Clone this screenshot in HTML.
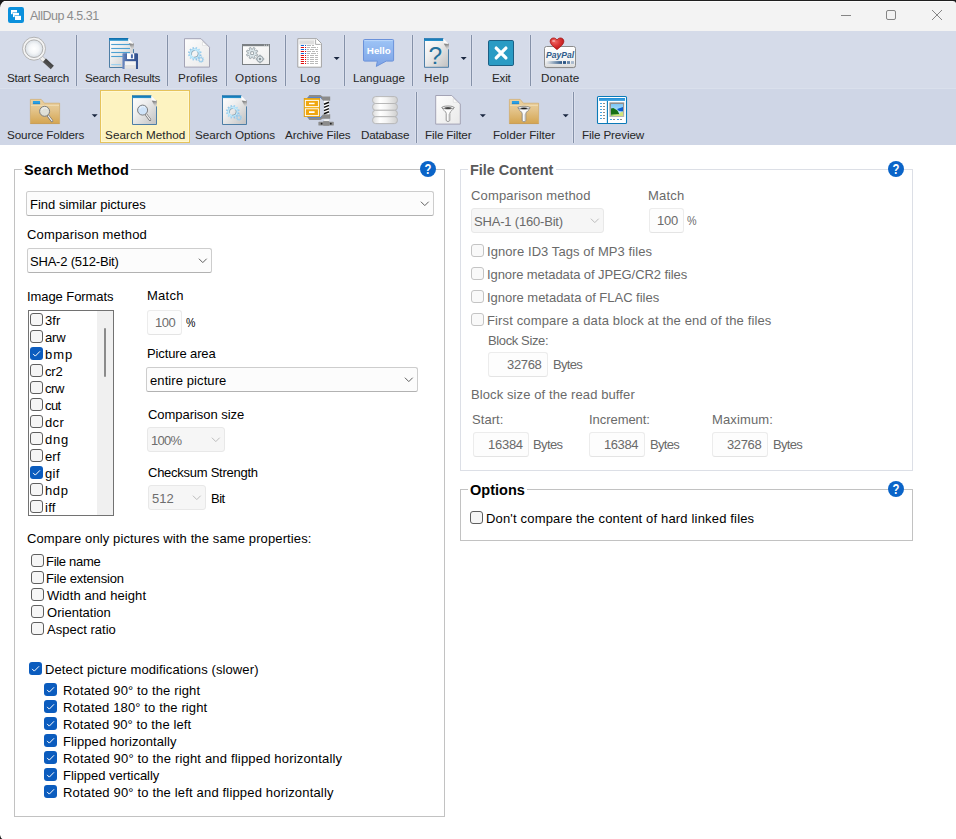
<!DOCTYPE html>
<html lang="en">
<head>
<meta charset="utf-8">
<title>AllDup 4.5.31</title>
<style>
html,body{margin:0;padding:0;background:#fff;}
body{width:956px;height:839px;overflow:hidden;font-family:"Liberation Sans",sans-serif;}
#win{position:relative;width:956px;height:839px;overflow:hidden;background:#fff;}
#win div,#win svg{position:absolute;box-sizing:border-box;}
.t{white-space:pre;line-height:16px;color:#000;}
.sep{width:1px;background:#8591a8;box-shadow:1px 0 0 #dbe0ed,-1px 0 0 #dbe0ed;}
.gb{border:1px solid #c2c2c2;}
.gbt{background:#fff;height:3px;}
.cb{border:1px solid #cdcdcd;border-bottom-color:#b2b2b2;border-radius:2.5px;background:#fcfcfc;}
.cbd{border:1px solid #e8e8e8;border-radius:3px;background:#f6f6f6;}
.ed{border:1px solid #ececec;border-bottom-color:#e4e4e4;border-radius:3px;background:#fdfdfd;}
.ck{width:13px;height:13px;border:1px solid #5f5f5f;border-radius:3px;background:#f6f6f6;}
.ckd{width:13px;height:13px;border:1px solid #c4c4c4;border-radius:3px;background:#f9f9f9;}
.ckc{width:13px;height:13px;border-radius:3px;background:#0b5cbe;}
</style>
</head>
<body>
<div id="win">
<!-- title bar -->
<div style="left:0;top:0;width:956px;height:31px;background:#f3f3f3;"></div>
<div style="left:0;top:0;width:956px;height:1px;background:#1f1f1f;"></div>
<div style="left:0;top:1px;width:956px;height:1px;background:#fbfbfb;"></div>
<svg style="left:0;top:0" width="10" height="10" viewBox="0 0 10 10"><path d="M0 0H7.4Q1 1 0 7.4Z" fill="#1a1a1a"/></svg>
<svg style="left:952px;top:0" width="4" height="4" viewBox="0 0 4 4"><path d="M4 0V3Q3.4 1 1 1V0Z" fill="#1a1a1a"/></svg>
<svg style="left:0;top:834px" width="3" height="5" viewBox="0 0 3 5"><path d="M0 5V1Q0.6 4 2.4 5Z" fill="#1a1a1a"/></svg>
<div style="left:0;top:31px;width:956px;height:57px;background:#d5dbe9;"></div>
<div style="left:0;top:88px;width:956px;height:57px;background:#cfd6e6;"></div>
<div style="left:0;top:88px;width:956px;height:1px;background:#dae0ec;"></div>
<!-- window controls -->
<svg style="left:836px;top:5px" width="112" height="22" viewBox="836 5 112 22" fill="none" stroke="#858585" stroke-width="1">
<path d="M841 15.5h10"/>
<rect x="886.5" y="10.5" width="9" height="9" rx="1.5"/>
<path d="M932 10l10 10M942 10l-10 10"/>
</svg>
<!-- separators tb1 -->
<div class="sep" style="left:76px;top:35px;height:51px"></div>
<div class="sep" style="left:167px;top:35px;height:51px"></div>
<div class="sep" style="left:226px;top:35px;height:51px"></div>
<div class="sep" style="left:285px;top:35px;height:51px"></div>
<div class="sep" style="left:344px;top:35px;height:51px"></div>
<div class="sep" style="left:412px;top:35px;height:51px"></div>
<div class="sep" style="left:471px;top:35px;height:51px"></div>
<div class="sep" style="left:530px;top:35px;height:51px"></div>
<!-- separators tb2 -->
<div class="sep" style="left:416px;top:92px;height:51px"></div>
<div class="sep" style="left:573px;top:92px;height:51px"></div>
<!-- selected button -->
<div style="left:100px;top:90px;width:90px;height:53px;background:#fdf3c1;border:1px solid #e5c35c;box-shadow:inset 0 0 0 1px #fff8d4;"></div>
<!-- dropdown arrows -->
<svg style="left:330px;top:52px" width="140" height="12" viewBox="330 52 140 12" fill="#1a2740">
<path d="M333.7 57h6l-3 3.1z"/><path d="M460.7 57h6l-3 3.1z"/>
</svg>
<svg style="left:90px;top:110px" width="482" height="12" viewBox="90 110 482 12" fill="#1a2740">
<path d="M91.7 114.2h6l-3 3.1z"/><path d="M479.8 114.2h6l-3 3.1z"/><path d="M562.7 114.2h6l-3 3.1z"/>
</svg>
<!-- group boxes -->
<div class="gb" style="left:14px;top:169px;width:431px;height:648px;"></div>
<div class="gbt" style="left:22px;top:168px;width:109px;"></div>
<div class="gb" style="left:460px;top:169px;width:453px;height:302px;border-color:#dcdfe6;"></div>
<div class="gbt" style="left:468px;top:168px;width:88px;"></div>
<div class="gb" style="left:460px;top:489px;width:453px;height:52px;"></div>
<div class="gbt" style="left:468px;top:488px;width:59px;"></div>
<!-- help icons -->
<svg style="left:419px;top:160px" width="18" height="18" viewBox="0 0 18 18"><circle cx="9" cy="9" r="8" fill="#0a64c8"/><text x="11" y="14.2" text-anchor="middle" transform="scale(0.82 1)" font-family="Liberation Sans, sans-serif" font-weight="bold" font-size="13.8" fill="#fff">?</text></svg>
<svg style="left:887px;top:160px" width="18" height="18" viewBox="0 0 18 18"><circle cx="9" cy="9" r="8" fill="#0a64c8"/><text x="11" y="14.2" text-anchor="middle" transform="scale(0.82 1)" font-family="Liberation Sans, sans-serif" font-weight="bold" font-size="13.8" fill="#fff">?</text></svg>
<svg style="left:887px;top:480px" width="18" height="18" viewBox="0 0 18 18"><circle cx="9" cy="9" r="8" fill="#0a64c8"/><text x="11" y="14.2" text-anchor="middle" transform="scale(0.82 1)" font-family="Liberation Sans, sans-serif" font-weight="bold" font-size="13.8" fill="#fff">?</text></svg>
<!-- icons -->
<svg style="left:0;top:0" width="956" height="146" viewBox="0 0 956 146">
<defs>
<radialGradient id="gLens" cx="0.5" cy="0.5" r="0.5"><stop offset="0" stop-color="#fff"/><stop offset="0.55" stop-color="#f4f6f8"/><stop offset="1" stop-color="#d9dfe5"/></radialGradient>
<linearGradient id="gDocB" x1="0" y1="0" x2="1" y2="1"><stop offset="0" stop-color="#fff"/><stop offset="0.4" stop-color="#eeeeee"/><stop offset="1" stop-color="#c0c0c0"/></linearGradient>
<linearGradient id="gDocW" x1="0" y1="0" x2="1" y2="1"><stop offset="0" stop-color="#fdfdfd"/><stop offset="1" stop-color="#e9e9e9"/></linearGradient>
<linearGradient id="gBar" x1="0" y1="0" x2="0" y2="1"><stop offset="0" stop-color="#0b67a6"/><stop offset="1" stop-color="#2a97d0"/></linearGradient>
<linearGradient id="gFold" x1="0" y1="0" x2="0.25" y2="1"><stop offset="0" stop-color="#555" stop-opacity="0.9"/><stop offset="0.45" stop-color="#808080" stop-opacity="0.6"/><stop offset="1" stop-color="#bbb" stop-opacity="0"/></linearGradient>
<linearGradient id="gFolder" x1="0" y1="0" x2="0" y2="1"><stop offset="0" stop-color="#ebd2a2"/><stop offset="0.45" stop-color="#e3c389"/><stop offset="1" stop-color="#d4a551"/></linearGradient>
<linearGradient id="gFloppy" x1="0" y1="0" x2="1" y2="0"><stop offset="0" stop-color="#6f8cc4"/><stop offset="0.35" stop-color="#3f5f9e"/><stop offset="1" stop-color="#34528f"/></linearGradient>
<linearGradient id="gBubble" x1="0" y1="0" x2="0" y2="1"><stop offset="0" stop-color="#9dc4f6"/><stop offset="1" stop-color="#7da3e6"/></linearGradient>
<linearGradient id="gDisc" x1="0" y1="0" x2="1" y2="0"><stop offset="0" stop-color="#dcdcdc"/><stop offset="0.3" stop-color="#fff"/><stop offset="0.55" stop-color="#f4f4f4"/><stop offset="1" stop-color="#cfcfcf"/></linearGradient>
<linearGradient id="gCard" x1="0" y1="0" x2="0" y2="1"><stop offset="0" stop-color="#fff"/><stop offset="0.7" stop-color="#f2f2f2"/><stop offset="1" stop-color="#d8d8d8"/></linearGradient>
<linearGradient id="gPPbar" x1="0" y1="0" x2="1" y2="0"><stop offset="0" stop-color="#2f5f8f" stop-opacity="0"/><stop offset="1" stop-color="#2b5584"/></linearGradient>
<radialGradient id="gHeart" cx="0.35" cy="0.3" r="0.8"><stop offset="0" stop-color="#f06a66"/><stop offset="0.5" stop-color="#d83232"/><stop offset="1" stop-color="#b01212"/></radialGradient>
<linearGradient id="gGear" x1="0" y1="0" x2="1" y2="1"><stop offset="0" stop-color="#84b8df"/><stop offset="0.5" stop-color="#b0e0f8"/><stop offset="1" stop-color="#74a9d9"/></linearGradient>
<linearGradient id="gWin" x1="0" y1="0" x2="1" y2="1"><stop offset="0" stop-color="#fff"/><stop offset="1" stop-color="#ededed"/></linearGradient>
<linearGradient id="gSky" x1="0" y1="0" x2="0" y2="1"><stop offset="0" stop-color="#7cc6f6"/><stop offset="1" stop-color="#d6f0fb"/></linearGradient>
<linearGradient id="gFrame" x1="0" y1="0" x2="0" y2="1"><stop offset="0" stop-color="#8a8a8a"/><stop offset="1" stop-color="#b8b8b8"/></linearGradient>
<linearGradient id="gHandle" gradientUnits="userSpaceOnUse" x1="46" y1="66" x2="50" y2="61"><stop offset="0" stop-color="#5a5a5a"/><stop offset="1" stop-color="#3c3c3c"/></linearGradient>
</defs>
<rect x="8" y="7" width="16" height="16" rx="2.2" fill="#0a90dc"/>
<rect x="11" y="10" width="6" height="4.2" fill="#fff"/>
<rect x="12.6" y="12.4" width="6.8" height="5" fill="#0a90dc"/><rect x="13" y="12.9" width="6" height="4.2" fill="#fff"/>
<rect x="14.6" y="15.3" width="6.8" height="5.1" fill="#0a90dc"/><rect x="15" y="15.8" width="6" height="4.2" fill="#fff"/>
<g>
<path d="M41.4 57.9L45 61.2" stroke="#b0b0b0" stroke-width="4.6"/>
<path d="M41 57.5L45 61.2" stroke="#f0f0f0" stroke-width="3.4"/>
<path d="M44.4 60.3L52.3 67.4" stroke="url(#gHandle)" stroke-width="4.7"/>
<circle cx="34" cy="48.7" r="11.5" fill="#f3f3f3" stroke="#adadad" stroke-width="0.9"/>
<circle cx="34" cy="48.7" r="8.8" fill="url(#gLens)" stroke="#a9a9a9" stroke-width="0.9"/>
</g>
<path d="M109.5 38.5H128.2L133.5 43.6V67.5H109.5Z" fill="url(#gDocB)"/>
<path d="M109.5 38.5V67.5H133.5V49.1" fill="none" stroke="#4d7ea6" stroke-width="1"/>
<path d="M109 38H128.4V40.8H109Z" fill="url(#gBar)"/>
<path d="M128.8 43.2L134 43.2V50.6L132.6 50.6Z" fill="url(#gFold)"/>
<path d="M128.2 38.4L133.8 43.9L128.6 43Z" fill="#fcfcfc"/>
<path d="M111.2 44.5H130" stroke="#4ea0d2" stroke-width="1.1"/>
<path d="M111.2 48.5H130" stroke="#4ea0d2" stroke-width="1.1"/>
<path d="M111.2 52.5H130" stroke="#4ea0d2" stroke-width="1.1"/>
<path d="M111.2 56.5H130" stroke="#4ea0d2" stroke-width="1.1"/>
<path d="M111.2 64.6H120.8" stroke="#9dd0ee" stroke-width="1.2"/>
<path d="M123 53.2H137.2L138 54V68.9H122.4V53.8Z" fill="url(#gFloppy)"/>
<rect x="127" y="53.2" width="7.2" height="5.9" fill="#fff"/>
<rect x="130.9" y="54.3" width="2" height="4" fill="#4668a8"/>
<rect x="124.7" y="61.2" width="11.2" height="7.7" fill="#f4f4f4"/><rect x="124.7" y="65" width="11.2" height="3.9" fill="#dcdcdc" opacity="0.7"/>
<path d="M184.5 38.7H201L209.5 47.2V67.1H184.5Z" fill="url(#gDocW)" stroke="#a3a3b5" stroke-width="1"/>
<path d="M202.5 41.7V45.4H206.8Z" fill="#fff" stroke="#cfcfcf" stroke-width="0.5"/>
<path d="M200.1 54.01L200.07 54.32L201.62 54.83L201.23 56.29L199.63 55.97L199.28 56.63L199.11 56.89L200.19 58.1L199.12 59.18L197.9 58.1L197.26 58.49L196.99 58.63L197.32 60.22L195.86 60.62L195.34 59.07L194.59 59.1L194.28 59.07L193.77 60.62L192.31 60.23L192.63 58.63L191.97 58.28L191.71 58.11L190.5 59.19L189.42 58.12L190.5 56.9L190.11 56.26L189.97 55.99L188.38 56.32L187.98 54.86L189.53 54.34L189.5 53.59L189.53 53.28L187.98 52.77L188.37 51.31L189.97 51.63L190.32 50.97L190.49 50.71L189.41 49.5L190.48 48.42L191.7 49.5L192.34 49.11L192.61 48.97L192.28 47.38L193.74 46.98L194.26 48.53L195.01 48.5L195.32 48.53L195.83 46.98L197.29 47.37L196.97 48.97L197.63 49.32L197.89 49.49L199.1 48.41L200.18 49.48L199.1 50.7L199.49 51.34L199.63 51.61L201.22 51.28L201.62 52.74L200.07 53.26Z M194.8 50.5a3.3 3.3 0 1 0 0.01 0Z" fill="url(#gGear)" fill-rule="evenodd"/>
<circle cx="194.8" cy="53.8" r="4.3" fill="none" stroke="#c4ecfb" stroke-width="1.2"/>
<circle cx="194.8" cy="53.8" r="3.3" fill="none" stroke="#6f7f8a" stroke-width="0.5" stroke-dasharray="6 3"/>
<path d="M203.26 59.14L203.28 59.32L204.2 59.45L204.1 60.41L203.18 60.35L203 60.76L202.91 60.92L203.52 61.6L202.83 62.27L202.17 61.64L201.76 61.84L201.59 61.9L201.62 62.82L200.66 62.89L200.56 61.98L200.12 61.87L199.95 61.8L199.38 62.53L198.6 61.97L199.11 61.2L198.84 60.84L198.76 60.68L197.85 60.87L197.62 59.94L198.5 59.68L198.53 59.23L198.56 59.05L197.75 58.62L198.17 57.75L199.01 58.12L199.32 57.79L199.47 57.67L199.12 56.82L200 56.43L200.41 57.25L200.86 57.2L201.04 57.2L201.32 56.33L202.25 56.59L202.03 57.48L202.41 57.73L202.55 57.85L203.33 57.36L203.87 58.16L203.13 58.71Z M200.9 58.3a1.3 1.3 0 1 0 0.01 0Z" fill="#9fcdea" fill-rule="evenodd"/>
<rect x="242.5" y="44.5" width="27" height="20" fill="url(#gWin)" stroke="#7b8084" stroke-width="1"/>
<rect x="242" y="44" width="28" height="2.2" fill="#7b8084"/>
<path d="M264 45.2h1M266 45.2h1M268 45.2h1" stroke="#d5d8da" stroke-width="0.9"/>
<path d="M255.99 53.34L255.96 53.68L257.75 54.41L257.02 56.17L255.24 55.42L254.68 56.03L254.42 56.24L255.17 58.02L253.41 58.75L252.68 56.96L251.86 56.99L251.52 56.96L250.79 58.75L249.03 58.02L249.78 56.24L249.17 55.68L248.96 55.42L247.18 56.17L246.45 54.41L248.24 53.68L248.21 52.86L248.24 52.52L246.45 51.79L247.18 50.03L248.96 50.78L249.52 50.17L249.78 49.96L249.03 48.18L250.79 47.45L251.52 49.24L252.34 49.21L252.68 49.24L253.41 47.45L255.17 48.18L254.42 49.96L255.03 50.52L255.24 50.78L257.02 50.03L257.75 51.79L255.96 52.52Z M250.9 51.9h2.4v2.4h-2.4Z" fill="#dce6ea" stroke="#8a949a" stroke-width="0.7" fill-rule="evenodd"/>
<rect x="250.9" y="51.9" width="2.4" height="2.4" fill="#fff" stroke="#8a949a" stroke-width="0.6"/>
<path d="M259.2 55.2h1.6v7.6h-1.6ZM256.2 58.2h7.6v1.6h-7.6Z" fill="#dce6ea" stroke="#8a949a" stroke-width="0.6"/>
<circle cx="260" cy="59" r="3.1" fill="#dce6ea" stroke="#8a949a" stroke-width="0.8"/>
<rect x="258.7" y="57.7" width="2.6" height="2.6" fill="#c9d2d7"/><rect x="259.2" y="58.2" width="1.6" height="1.6" fill="#6f777c"/>
<path d="M297.8 38.7H316.7L321.4 43.4V67.2H297.8Z" fill="#fff" stroke="#a3a3a3" stroke-width="1"/>
<rect x="299.3" y="40.3" width="15" height="4.2" fill="#dedede"/>
<path d="M315.6 39.6V44.4H320.6" fill="#fff" stroke="#a3a3a3" stroke-width="0.9"/>
<path d="M300.8 45.5H304M305 45.5H306.1" stroke="#1668d6" stroke-width="1"/>
<path d="M307 45.5H311M312 45.5H314" stroke="#b9b9b9" stroke-width="1"/>
<path d="M300.8 47.5H304M305 47.5H306.1" stroke="#e01010" stroke-width="1"/>
<path d="M307 47.5H310M311 47.5H316M317 47.5H318" stroke="#b9b9b9" stroke-width="1"/>
<path d="M300.8 49.5H304M305 49.5H306.1" stroke="#1668d6" stroke-width="1"/>
<path d="M307 49.5H309M310 49.5H314M315 49.5H318" stroke="#b9b9b9" stroke-width="1"/>
<path d="M300.8 51.5H304M305 51.5H306.1" stroke="#e01010" stroke-width="1"/>
<path d="M307 51.5H311M312 51.5H315M316 51.5H318" stroke="#b9b9b9" stroke-width="1"/>
<path d="M300.8 53.5H304M305 53.5H306.1" stroke="#1668d6" stroke-width="1"/>
<path d="M307 53.5H310M311 53.5H316M317 53.5H318" stroke="#b9b9b9" stroke-width="1"/>
<path d="M300.8 55.5H304M305 55.5H306.1" stroke="#e01010" stroke-width="1"/>
<path d="M307 55.5H309M310 55.5H314M315 55.5H318" stroke="#b9b9b9" stroke-width="1"/>
<path d="M300.8 57.5H304M305 57.5H306.1" stroke="#e01010" stroke-width="1"/>
<path d="M307 57.5H309M310 57.5H314M315 57.5H318" stroke="#b9b9b9" stroke-width="1"/>
<path d="M300.8 59.5H304M305 59.5H306.1" stroke="#e01010" stroke-width="1"/>
<path d="M307 59.5H309M310 59.5H314M315 59.5H318" stroke="#b9b9b9" stroke-width="1"/>
<path d="M300.8 61.5H304M305 61.5H306.1" stroke="#e01010" stroke-width="1"/>
<path d="M307 61.5H309M310 61.5H314M315 61.5H318" stroke="#b9b9b9" stroke-width="1"/>
<path d="M300.8 63.5H304M305 63.5H306.1" stroke="#e01010" stroke-width="1"/>
<path d="M307 63.5H309M310 63.5H314M315 63.5H318" stroke="#b9b9b9" stroke-width="1"/>
<path d="M364.5 39.5H392.6Q393.6 39.5 393.6 40.5V60.1Q393.6 61.1 392.6 61.1H386.2L376.3 66.4L377.4 61.1H364.5Q363.5 61.1 363.5 60.1V40.5Q363.5 39.5 364.5 39.5Z" fill="url(#gBubble)" stroke="#6b92da" stroke-width="1"/>
<path d="M364.6 40.6H392.5" stroke="#c4dcfa" stroke-width="0.8"/>
<text x="378.8" y="54.1" text-anchor="middle" font-family="Liberation Sans, sans-serif" font-weight="bold" font-size="9.4" fill="#fff" textLength="24" lengthAdjust="spacingAndGlyphs">Hello</text>
<path d="M424.5 38.7H443.2L448.5 43.8V67.3H424.5Z" fill="url(#gDocB)"/>
<path d="M424.5 38.7V67.3H448.5V49.3" fill="none" stroke="#4d7ea6" stroke-width="1"/>
<path d="M424 38.2H443.4V41H424Z" fill="url(#gBar)"/>
<path d="M443.8 43.4L449 43.4V50.8L447.6 50.8Z" fill="url(#gFold)"/>
<path d="M443.2 38.6L448.8 44.1L443.6 43.2Z" fill="#fcfcfc"/>
<text x="435.2" y="64" text-anchor="middle" font-family="Liberation Sans, sans-serif" font-size="24.5" fill="#22709c">?</text>
<rect x="488.5" y="40.5" width="25" height="25" rx="1.3" fill="#2a9bc4" stroke="#1c5f84" stroke-width="1"/>
<path d="M496.2 48.1L505.9 57.9M505.9 48.1L496.2 57.9" stroke="#fff" stroke-width="3.3" stroke-linecap="round"/>
<rect x="544.3" y="46.9" width="31.4" height="21.4" rx="2.2" fill="#9a9a9a" opacity="0.55"/>
<rect x="544.5" y="46.5" width="31" height="21" rx="2" fill="url(#gCard)" stroke="#8c8c8c" stroke-width="1"/>
<text x="546" y="57.9" font-family="Liberation Sans, sans-serif" font-weight="bold" font-style="italic" font-size="9.3" fill="#2f5d8c" textLength="28" lengthAdjust="spacingAndGlyphs">PayPal</text>
<rect x="546" y="61.1" width="16" height="2.8" fill="url(#gPPbar)"/>
<rect x="563" y="61.1" width="3" height="2.8" fill="#2b5584"/><rect x="567" y="61.1" width="3" height="2.8" fill="#6484a8"/><rect x="571" y="61.1" width="3" height="2.8" fill="#a9bace"/>
<path d="M557 49.6C553 46.4 550.2 44 550.2 41.3C550.2 39.2 551.8 38 553.6 38C555 38 556.3 38.8 557 40.1C557.7 38.8 559 38 560.4 38C562.2 38 563.8 39.2 563.8 41.3C563.8 44 561 46.4 557 49.6Z" fill="url(#gHeart)" stroke="#a30d0d" stroke-width="0.8"/>
<ellipse cx="553.6" cy="41" rx="1.6" ry="1" fill="#fff" opacity="0.45"/>
<path d="M30.4 99.4H41.2L44.4 103.2H59.6V123.6H30.4Z" fill="url(#gFolder)" stroke="#d2a75e" stroke-width="0.8" stroke-opacity="0.8"/>
<path d="M31 105.4H59" stroke="#f3dfb8" stroke-width="0.8"/>
<path d="M30.4 123.4H59.6" stroke="#c48f3a" stroke-width="0.8" opacity="0.7"/>
<rect x="32.9" y="100.9" width="7.2" height="3.2" rx="0.4" fill="#2b9fe2"/>
<path d="M32.9 103.7h7.2" stroke="#1a86cc" stroke-width="0.8"/>
<path d="M48.2 115.9L52 120.9" stroke="#6a6a6a" stroke-width="2.4" stroke-linecap="round"/>
<path d="M48.2 115.9L52 120.9" stroke="#f0f0f0" stroke-width="1.2" stroke-linecap="round"/>
<circle cx="44.6" cy="111.3" r="5" fill="rgba(222,230,234,0.82)" stroke="#7e7e7e" stroke-width="1"/>
<path d="M41.6 110.3a3.4 3.4 0 0 1 5.6 -1.6" fill="none" stroke="#fff" stroke-width="0.9" opacity="0.7"/>
<path d="M132.5 95.8H151.2L156.5 100.9V124.5H132.5Z" fill="url(#gDocB)"/>
<path d="M132.5 95.8V124.5H156.5V106.4" fill="none" stroke="#4d7ea6" stroke-width="1"/>
<path d="M132 95.3H151.4V98.1H132Z" fill="url(#gBar)"/>
<path d="M151.8 100.5L157 100.5V107.9L155.6 107.9Z" fill="url(#gFold)"/>
<path d="M151.2 95.7L156.8 101.2L151.6 100.3Z" fill="#fcfcfc"/>
<path d="M146.2 114.7L150 119.7" stroke="#6a6a6a" stroke-width="2.4" stroke-linecap="round"/>
<path d="M146.2 114.7L150 119.7" stroke="#f0f0f0" stroke-width="1.2" stroke-linecap="round"/>
<circle cx="142.6" cy="110.1" r="5" fill="#cfe3f8" stroke="#7e7e7e" stroke-width="1"/>
<path d="M139.6 109.1a3.4 3.4 0 0 1 5.6 -1.6" fill="none" stroke="#fff" stroke-width="0.9" opacity="0.7"/>
<path d="M222.5 95.8H241.2L246.5 100.9V124.5H222.5Z" fill="url(#gDocB)"/>
<path d="M222.5 95.8V124.5H246.5V106.4" fill="none" stroke="#4d7ea6" stroke-width="1"/>
<path d="M222 95.3H241.4V98.1H222Z" fill="url(#gBar)"/>
<path d="M241.8 100.5L247 100.5V107.9L245.6 107.9Z" fill="url(#gFold)"/>
<path d="M241.2 95.7L246.8 101.2L241.6 100.3Z" fill="#fcfcfc"/>
<path d="M238.1 112.01L238.07 112.32L239.62 112.83L239.23 114.29L237.63 113.97L237.28 114.63L237.11 114.89L238.19 116.1L237.12 117.18L235.9 116.1L235.26 116.49L234.99 116.63L235.32 118.22L233.86 118.62L233.34 117.07L232.59 117.1L232.28 117.07L231.77 118.62L230.31 118.23L230.63 116.63L229.97 116.28L229.71 116.11L228.5 117.19L227.42 116.12L228.5 114.9L228.11 114.26L227.97 113.99L226.38 114.32L225.98 112.86L227.53 112.34L227.5 111.59L227.53 111.28L225.98 110.77L226.37 109.31L227.97 109.63L228.32 108.97L228.49 108.71L227.41 107.5L228.48 106.42L229.7 107.5L230.34 107.11L230.61 106.97L230.28 105.38L231.74 104.98L232.26 106.53L233.01 106.5L233.32 106.53L233.83 104.98L235.29 105.37L234.97 106.97L235.63 107.32L235.89 107.49L237.1 106.41L238.18 107.48L237.1 108.7L237.49 109.34L237.63 109.61L239.22 109.28L239.62 110.74L238.07 111.26Z M232.8 108.5a3.3 3.3 0 1 0 0.01 0Z" fill="url(#gGear)" fill-rule="evenodd"/>
<circle cx="232.8" cy="111.8" r="4.3" fill="none" stroke="#c4ecfb" stroke-width="1.2"/>
<circle cx="232.8" cy="111.8" r="3.3" fill="none" stroke="#6f7f8a" stroke-width="0.5" stroke-dasharray="6 3"/>
<path d="M241.26 117.14L241.28 117.32L242.2 117.45L242.1 118.41L241.18 118.35L241 118.76L240.91 118.92L241.52 119.6L240.83 120.27L240.17 119.64L239.76 119.84L239.59 119.9L239.62 120.82L238.66 120.89L238.56 119.98L238.12 119.87L237.95 119.8L237.38 120.53L236.6 119.97L237.11 119.2L236.84 118.84L236.76 118.68L235.85 118.87L235.62 117.94L236.5 117.68L236.53 117.23L236.56 117.05L235.75 116.62L236.17 115.75L237.01 116.12L237.32 115.79L237.47 115.67L237.12 114.82L238 114.43L238.41 115.25L238.86 115.2L239.04 115.2L239.32 114.33L240.25 114.59L240.03 115.48L240.41 115.73L240.55 115.85L241.33 115.36L241.87 116.16L241.13 116.71Z M238.9 116.3a1.3 1.3 0 1 0 0.01 0Z" fill="#9fcdea" fill-rule="evenodd"/>
<path d="M307.4 97.8L309.4 95H320.4L322.6 96.6H330.2V100.8H323.2L321 98.6V97.8Z" fill="#8b8b8b"/>
<path d="M307.4 117.2L309.4 120H320.4L322.6 118.8H330.2V114.2H323.2L321 116.4V117.2Z" fill="#8b8b8b"/>
<path d="M307.6 97.5H320.8L321.6 98.6M307.6 117.4H320.8L321.6 116.4" stroke="#4f80d0" stroke-width="0.9" fill="none"/>
<rect x="304.2" y="98.4" width="15.4" height="18.2" fill="#f2b21c" stroke="#dc9c10" stroke-width="0.8"/>
<rect x="305.4" y="100.4" width="13" height="6.2" fill="#f0a60e" stroke="#fff" stroke-width="0.9"/>
<rect x="305.4" y="108.8" width="13" height="6.8" fill="#f0a60e" stroke="#fff" stroke-width="0.9"/>
<path d="M309 103.5H314.6M309 112.1H314.6" stroke="#fff" stroke-width="1.6"/>
<rect x="324" y="100.8" width="5" height="13.4" fill="#fff"/>
<path d="M324 104.2L329 102.2M324 107.4L329 105.4M324 110.6L329 108.6M324 113.8L329 111.8" stroke="#111" stroke-width="1.5"/>
<rect x="324.2" y="119.4" width="4.8" height="1.8" fill="#f0f0f0"/>
<rect x="318.4" y="121.8" width="15.4" height="3.8" rx="0.6" fill="#8b8b8b"/><rect x="323.2" y="121.1" width="6" height="4.6" fill="#8b8b8b"/>
<circle cx="321.6" cy="123.7" r="0.9" fill="#222"/><circle cx="330.8" cy="123.7" r="0.9" fill="#222"/>
<rect x="372.6" y="96.6" width="24.8" height="6.9" rx="3" fill="url(#gDisc)" stroke="#b3b3b3" stroke-width="0.9"/>
<rect x="372.6" y="103.5" width="24.8" height="6.8" rx="3" fill="url(#gDisc)" stroke="#b3b3b3" stroke-width="0.9"/>
<rect x="372.6" y="110.3" width="24.8" height="6.4" rx="3" fill="url(#gDisc)" stroke="#b3b3b3" stroke-width="0.9"/>
<rect x="372.6" y="116.7" width="24.8" height="6.9" rx="3" fill="url(#gDisc)" stroke="#b3b3b3" stroke-width="0.9"/>
<path d="M435.7 95.5H451.8L460.3 104V124.1H435.7Z" fill="url(#gDocW)" stroke="#a3a3b5" stroke-width="1"/>
<path d="M453.3 98.5V102.2H457.6Z" fill="#fff" stroke="#cfcfcf" stroke-width="0.5"/>
<path d="M442 107.4C442.4 110 446.2 111.2 446.2 113.4V120.6Q448 122.6 449.8 120.6V113.4C449.8 111.2 453.6 110 454 107.4Z" fill="#fbfbfb" stroke="#7d7d7d" stroke-width="0.8"/>
<ellipse cx="448" cy="107.5" rx="6" ry="1.5" fill="#f4f4f4" stroke="#7d7d7d" stroke-width="0.8"/>
<ellipse cx="448" cy="108" rx="3.6" ry="0.7" fill="#1c1c1c"/>
<path d="M448.8 114V120.5" stroke="#c9c9c9" stroke-width="0.8"/>
<path d="M509.4 99.4H520.2L523.4 103.2H538.6V123.6H509.4Z" fill="url(#gFolder)" stroke="#d2a75e" stroke-width="0.8" stroke-opacity="0.8"/>
<path d="M510 105.4H538" stroke="#f3dfb8" stroke-width="0.8"/>
<path d="M509.4 123.4H538.6" stroke="#c48f3a" stroke-width="0.8" opacity="0.7"/>
<rect x="511.9" y="100.9" width="7.2" height="3.2" rx="0.4" fill="#2b9fe2"/>
<path d="M511.9 103.7h7.2" stroke="#1a86cc" stroke-width="0.8"/>
<path d="M518 107.7C518.4 110.3 522.2 111.5 522.2 113.7V120.9Q524 122.9 525.8 120.9V113.7C525.8 111.5 529.6 110.3 530 107.7Z" fill="#fbfbfb" stroke="#7d7d7d" stroke-width="0.8"/>
<ellipse cx="524" cy="107.8" rx="6" ry="1.5" fill="#f4f4f4" stroke="#7d7d7d" stroke-width="0.8"/>
<ellipse cx="524" cy="108.3" rx="3.6" ry="0.7" fill="#1c1c1c"/>
<path d="M524.8 114.3V120.8" stroke="#c9c9c9" stroke-width="0.8"/>
<rect x="597.5" y="96.5" width="29" height="27" rx="1.1" fill="#fff" stroke="#0b7ab8" stroke-width="1.1"/>
<rect x="599" y="98" width="26" height="2.9" fill="#2592d8"/><rect x="599" y="99.6" width="26" height="1.3" fill="#4ba8e2"/>
<path d="M607.4 100.9V123.5" stroke="#0b7ab8" stroke-width="1.1"/>
<path d="M600 103.5H602" stroke="#49a4e0" stroke-width="1"/><path d="M603 103.5H605" stroke="#8d8d8d" stroke-width="1"/>
<path d="M600 106.5H602" stroke="#49a4e0" stroke-width="1"/><path d="M603 106.5H605" stroke="#8d8d8d" stroke-width="1"/>
<path d="M600 109.5H602" stroke="#49a4e0" stroke-width="1"/><path d="M603 109.5H605" stroke="#8d8d8d" stroke-width="1"/>
<path d="M600 112.5H602" stroke="#49a4e0" stroke-width="1"/><path d="M603 112.5H605" stroke="#8d8d8d" stroke-width="1"/>
<path d="M600 115.5H602" stroke="#49a4e0" stroke-width="1"/><path d="M603 115.5H605" stroke="#8d8d8d" stroke-width="1"/>
<path d="M600 118.5H602" stroke="#49a4e0" stroke-width="1"/><path d="M603 118.5H605" stroke="#8d8d8d" stroke-width="1"/>
<rect x="609.4" y="102.4" width="14.8" height="14.6" fill="url(#gFrame)"/>
<rect x="611" y="104" width="12" height="12" fill="url(#gSky)"/>
<path d="M617 109L623 107V111.6L619 111Z" fill="#0d5fd0"/>
<path d="M611 108.6L613.4 108L617.4 110.6L619.6 114.4L611 115Z" fill="#167016"/>
<path d="M611 114.8L619.6 114.2L620.4 112.4L623 111.6V116H611Z" fill="#cfe57a"/>
<path d="M611 115L616 114.6L611 116Z" fill="#7fc860"/>
<path d="M610 119.5H612M617 119.5H619" stroke="#49a4e0" stroke-width="1"/><path d="M613 119.5H615M620 119.5H622" stroke="#8d8d8d" stroke-width="1"/>
</svg>
<!-- controls -->
<div class="cb" style="left:26px;top:191px;width:408px;height:25px"></div>
<svg style="left:419.0px;top:200.3px" width="12" height="8" viewBox="0 0 12 8" fill="none" stroke="#5e5e5e" stroke-width="1"><path d="M1.9 1.7l3.9 3.9l3.9-3.9"/></svg>
<div class="cb" style="left:27px;top:248px;width:185px;height:25px"></div>
<svg style="left:197.0px;top:257.3px" width="12" height="8" viewBox="0 0 12 8" fill="none" stroke="#5e5e5e" stroke-width="1"><path d="M1.9 1.7l3.9 3.9l3.9-3.9"/></svg>
<div style="left:28px;top:310px;width:86px;height:206px;border:1px solid #727272;background:#fff"></div>
<div style="left:97px;top:311px;width:16px;height:204px;background:#f0f0f0"></div>
<div style="left:104px;top:328px;width:2px;height:49px;background:#8b8b8b;border-radius:1px"></div>
<div class="ck" style="left:30px;top:313px"></div>
<div class="ck" style="left:30px;top:330px"></div>
<div class="ckc" style="left:30px;top:347px"></div>
<svg style="left:30px;top:347px" width="13" height="13" viewBox="0 0 13 13" fill="none" stroke="#fff" stroke-width="1"><path d="M3.1 6.9L5.3 9.1L10 4.3"/></svg>
<div class="ck" style="left:30px;top:364px"></div>
<div class="ck" style="left:30px;top:381px"></div>
<div class="ck" style="left:30px;top:398px"></div>
<div class="ck" style="left:30px;top:415px"></div>
<div class="ck" style="left:30px;top:432px"></div>
<div class="ck" style="left:30px;top:449px"></div>
<div class="ckc" style="left:30px;top:466px"></div>
<svg style="left:30px;top:466px" width="13" height="13" viewBox="0 0 13 13" fill="none" stroke="#fff" stroke-width="1"><path d="M3.1 6.9L5.3 9.1L10 4.3"/></svg>
<div class="ck" style="left:30px;top:483px"></div>
<div class="ck" style="left:30px;top:500px"></div>
<div class="ed" style="left:147px;top:310px;width:35px;height:25px"></div>
<div class="cb" style="left:146px;top:367px;width:272px;height:25px"></div>
<svg style="left:403.0px;top:376.3px" width="12" height="8" viewBox="0 0 12 8" fill="none" stroke="#5e5e5e" stroke-width="1"><path d="M1.9 1.7l3.9 3.9l3.9-3.9"/></svg>
<div class="cbd" style="left:147px;top:427px;width:78px;height:25px"></div>
<svg style="left:210.0px;top:436.3px" width="12" height="8" viewBox="0 0 12 8" fill="none" stroke="#bcbcbc" stroke-width="1"><path d="M1.9 1.7l3.9 3.9l3.9-3.9"/></svg>
<div class="cbd" style="left:148px;top:485px;width:58px;height:25px"></div>
<svg style="left:191.0px;top:494.3px" width="12" height="8" viewBox="0 0 12 8" fill="none" stroke="#bcbcbc" stroke-width="1"><path d="M1.9 1.7l3.9 3.9l3.9-3.9"/></svg>
<div class="ck" style="left:31px;top:554px"></div>
<div class="ck" style="left:31px;top:571px"></div>
<div class="ck" style="left:31px;top:588px"></div>
<div class="ck" style="left:31px;top:605px"></div>
<div class="ck" style="left:31px;top:622px"></div>
<div class="ckc" style="left:29px;top:662px"></div>
<svg style="left:29px;top:662px" width="13" height="13" viewBox="0 0 13 13" fill="none" stroke="#fff" stroke-width="1"><path d="M3.1 6.9L5.3 9.1L10 4.3"/></svg>
<div class="ckc" style="left:44px;top:683px"></div>
<svg style="left:44px;top:683px" width="13" height="13" viewBox="0 0 13 13" fill="none" stroke="#fff" stroke-width="1"><path d="M3.1 6.9L5.3 9.1L10 4.3"/></svg>
<div class="ckc" style="left:44px;top:700px"></div>
<svg style="left:44px;top:700px" width="13" height="13" viewBox="0 0 13 13" fill="none" stroke="#fff" stroke-width="1"><path d="M3.1 6.9L5.3 9.1L10 4.3"/></svg>
<div class="ckc" style="left:44px;top:717px"></div>
<svg style="left:44px;top:717px" width="13" height="13" viewBox="0 0 13 13" fill="none" stroke="#fff" stroke-width="1"><path d="M3.1 6.9L5.3 9.1L10 4.3"/></svg>
<div class="ckc" style="left:44px;top:734px"></div>
<svg style="left:44px;top:734px" width="13" height="13" viewBox="0 0 13 13" fill="none" stroke="#fff" stroke-width="1"><path d="M3.1 6.9L5.3 9.1L10 4.3"/></svg>
<div class="ckc" style="left:44px;top:751px"></div>
<svg style="left:44px;top:751px" width="13" height="13" viewBox="0 0 13 13" fill="none" stroke="#fff" stroke-width="1"><path d="M3.1 6.9L5.3 9.1L10 4.3"/></svg>
<div class="ckc" style="left:44px;top:768px"></div>
<svg style="left:44px;top:768px" width="13" height="13" viewBox="0 0 13 13" fill="none" stroke="#fff" stroke-width="1"><path d="M3.1 6.9L5.3 9.1L10 4.3"/></svg>
<div class="ckc" style="left:44px;top:785px"></div>
<svg style="left:44px;top:785px" width="13" height="13" viewBox="0 0 13 13" fill="none" stroke="#fff" stroke-width="1"><path d="M3.1 6.9L5.3 9.1L10 4.3"/></svg>
<div class="cbd" style="left:471px;top:208px;width:133px;height:25px"></div>
<svg style="left:589.0px;top:217.3px" width="12" height="8" viewBox="0 0 12 8" fill="none" stroke="#bcbcbc" stroke-width="1"><path d="M1.9 1.7l3.9 3.9l3.9-3.9"/></svg>
<div class="ed" style="left:649px;top:208px;width:35px;height:25px"></div>
<div class="ckd" style="left:471px;top:244px"></div>
<div class="ckd" style="left:471px;top:267px"></div>
<div class="ckd" style="left:471px;top:290px"></div>
<div class="ckd" style="left:471px;top:313px"></div>
<div class="ed" style="left:488px;top:352px;width:60px;height:25px"></div>
<div class="ed" style="left:473px;top:432px;width:56px;height:25px"></div>
<div class="ed" style="left:589px;top:432px;width:56px;height:25px"></div>
<div class="ed" style="left:712px;top:432px;width:56px;height:25px"></div>
<div class="ck" style="left:470px;top:511px"></div>

<!-- text -->
<div class="t" style="left:30px;top:7.5px;font-size:12.5px;color:#8c8c8c;letter-spacing:-0.49px;">AllDup 4.5.31</div>
<div class="t" style="left:7px;top:69.6px;font-size:11.7px;color:#262626;letter-spacing:-0.25px;">Start Search</div>
<div class="t" style="left:85px;top:69.6px;font-size:11.7px;color:#262626;letter-spacing:-0.3px;">Search Results</div>
<div class="t" style="left:178px;top:69.6px;font-size:11.7px;color:#262626;letter-spacing:0.1px;">Profiles</div>
<div class="t" style="left:235px;top:69.6px;font-size:11.7px;color:#262626;letter-spacing:0.3px;">Options</div>
<div class="t" style="left:300px;top:69.6px;font-size:11.7px;color:#262626;letter-spacing:0.37px;">Log</div>
<div class="t" style="left:353px;top:69.6px;font-size:11.7px;color:#262626;">Language</div>
<div class="t" style="left:424px;top:69.6px;font-size:11.7px;color:#262626;letter-spacing:0.21px;">Help</div>
<div class="t" style="left:492px;top:69.6px;font-size:11.7px;color:#262626;letter-spacing:-0.25px;">Exit</div>
<div class="t" style="left:541px;top:69.6px;font-size:11.7px;color:#262626;letter-spacing:0.13px;">Donate</div>
<div class="t" style="left:7px;top:126.6px;font-size:11.7px;color:#262626;letter-spacing:-0.14px;">Source Folders</div>
<div class="t" style="left:105px;top:126.6px;font-size:11.7px;color:#262626;letter-spacing:0.09px;">Search Method</div>
<div class="t" style="left:195px;top:126.6px;font-size:11.7px;color:#262626;letter-spacing:-0.04px;">Search Options</div>
<div class="t" style="left:285px;top:126.6px;font-size:11.7px;color:#262626;letter-spacing:-0.1px;">Archive Files</div>
<div class="t" style="left:361px;top:126.6px;font-size:11.7px;color:#262626;letter-spacing:-0.22px;">Database</div>
<div class="t" style="left:425px;top:126.6px;font-size:11.7px;color:#262626;letter-spacing:-0.15px;">File Filter</div>
<div class="t" style="left:493px;top:126.6px;font-size:11.7px;color:#262626;letter-spacing:-0.02px;">Folder Filter</div>
<div class="t" style="left:582px;top:126.6px;font-size:11.7px;color:#262626;letter-spacing:-0.13px;">File Preview</div>
<div class="t" style="left:24px;top:162.3px;font-size:14.5px;font-weight:bold;letter-spacing:0.08px;">Search Method</div>
<div class="t" style="left:30px;top:197.0px;font-size:13px;letter-spacing:0.01px;">Find similar pictures</div>
<div class="t" style="left:27px;top:227.0px;font-size:13px;letter-spacing:0.17px;">Comparison method</div>
<div class="t" style="left:30px;top:254.0px;font-size:13px;letter-spacing:-0.21px;">SHA-2 (512-Bit)</div>
<div class="t" style="left:27px;top:289.0px;font-size:13px;letter-spacing:-0.07px;">Image Formats</div>
<div class="t" style="left:147px;top:288.0px;font-size:13px;letter-spacing:0.25px;">Match</div>
<div class="t" style="left:45px;top:313.0px;font-size:13px;letter-spacing:0.09px;">3fr</div>
<div class="t" style="left:45px;top:330.0px;font-size:13px;letter-spacing:-0.21px;">arw</div>
<div class="t" style="left:45px;top:347.0px;font-size:13px;letter-spacing:1.0px;">bmp</div>
<div class="t" style="left:45px;top:364.0px;font-size:13px;letter-spacing:-0.19px;">cr2</div>
<div class="t" style="left:45px;top:381.0px;font-size:13px;letter-spacing:-0.41px;">crw</div>
<div class="t" style="left:45px;top:398.0px;font-size:13px;letter-spacing:-0.57px;">cut</div>
<div class="t" style="left:45px;top:415.0px;font-size:13px;letter-spacing:0.34px;">dcr</div>
<div class="t" style="left:45px;top:432.0px;font-size:13px;letter-spacing:0.73px;">dng</div>
<div class="t" style="left:45px;top:449.0px;font-size:13px;letter-spacing:0.11px;">erf</div>
<div class="t" style="left:45px;top:466.0px;font-size:13px;letter-spacing:0.32px;">gif</div>
<div class="t" style="left:45px;top:483.0px;font-size:13px;letter-spacing:0.59px;">hdp</div>
<div class="t" style="left:45px;top:500.0px;font-size:13px;letter-spacing:0.28px;">iff</div>
<div class="t" style="left:155px;top:315.0px;font-size:13px;color:#6d6d6d;letter-spacing:-0.42px;">100</div>
<div class="t" style="left:186px;top:315.0px;font-size:13px;transform-origin:0 0;transform:scaleX(0.815);">%</div>
<div class="t" style="left:147px;top:346.0px;font-size:13px;letter-spacing:-0.13px;">Picture area</div>
<div class="t" style="left:150px;top:373.0px;font-size:13px;letter-spacing:0.09px;">entire picture</div>
<div class="t" style="left:148px;top:407.0px;font-size:13px;letter-spacing:-0.04px;">Comparison size</div>
<div class="t" style="left:151px;top:433.0px;font-size:13px;color:#6d6d6d;letter-spacing:-0.69px;">100%</div>
<div class="t" style="left:148px;top:465.0px;font-size:13px;letter-spacing:-0.26px;">Checksum Strength</div>
<div class="t" style="left:152px;top:491.0px;font-size:13px;color:#6d6d6d;letter-spacing:0.04px;">512</div>
<div class="t" style="left:211px;top:491.0px;font-size:13px;letter-spacing:-0.52px;">Bit</div>
<div class="t" style="left:27px;top:531.0px;font-size:13px;letter-spacing:0.12px;">Compare only pictures with the same properties:</div>
<div class="t" style="left:46px;top:554.0px;font-size:13px;letter-spacing:-0.3px;">File name</div>
<div class="t" style="left:46px;top:571.0px;font-size:13px;letter-spacing:-0.17px;">File extension</div>
<div class="t" style="left:47px;top:588.0px;font-size:13px;letter-spacing:0.1px;">Width and height</div>
<div class="t" style="left:47px;top:605.0px;font-size:13px;letter-spacing:0.02px;">Orientation</div>
<div class="t" style="left:47px;top:622.0px;font-size:13px;letter-spacing:0.01px;">Aspect ratio</div>
<div class="t" style="left:45px;top:662.0px;font-size:13px;letter-spacing:0.11px;">Detect picture modifications (slower)</div>
<div class="t" style="left:63px;top:683.0px;font-size:13px;letter-spacing:0.14px;">Rotated 90° to the right</div>
<div class="t" style="left:63px;top:700.0px;font-size:13px;letter-spacing:0.13px;">Rotated 180° to the right</div>
<div class="t" style="left:63px;top:717.0px;font-size:13px;letter-spacing:0.1px;">Rotated 90° to the left</div>
<div class="t" style="left:63px;top:734.0px;font-size:13px;letter-spacing:0.08px;">Flipped horizontally</div>
<div class="t" style="left:63px;top:751.0px;font-size:13px;letter-spacing:0.18px;">Rotated 90° to the right and flipped horizontally</div>
<div class="t" style="left:63px;top:768.0px;font-size:13px;letter-spacing:-0.03px;">Flipped vertically</div>
<div class="t" style="left:63px;top:785.0px;font-size:13px;letter-spacing:0.17px;">Rotated 90° to the left and flipped horizontally</div>
<div class="t" style="left:470px;top:162.3px;font-size:14.5px;font-weight:bold;color:#5a5a5a;letter-spacing:-0.04px;">File Content</div>
<div class="t" style="left:471px;top:188.0px;font-size:13px;color:#6a6a6a;letter-spacing:0.15px;">Comparison method</div>
<div class="t" style="left:648px;top:188.0px;font-size:13px;color:#6a6a6a;letter-spacing:0.23px;">Match</div>
<div class="t" style="left:474px;top:214.0px;font-size:13px;color:#6a6a6a;letter-spacing:-0.19px;">SHA-1 (160-Bit)</div>
<div class="t" style="left:657px;top:213.0px;font-size:13px;color:#6a6a6a;letter-spacing:-0.18px;">100</div>
<div class="t" style="left:687px;top:213.0px;font-size:13px;color:#6a6a6a;transform-origin:0 0;transform:scaleX(0.828);">%</div>
<div class="t" style="left:487px;top:244.0px;font-size:13px;color:#6a6a6a;letter-spacing:0.07px;">Ignore ID3 Tags of MP3 files</div>
<div class="t" style="left:487px;top:267.0px;font-size:13px;color:#6a6a6a;letter-spacing:-0.09px;">Ignore metadata of JPEG/CR2 files</div>
<div class="t" style="left:487px;top:290.0px;font-size:13px;color:#6a6a6a;letter-spacing:-0.02px;">Ignore metadata of FLAC files</div>
<div class="t" style="left:487px;top:313.0px;font-size:13px;color:#6a6a6a;letter-spacing:0.14px;">First compare a data block at the end of the files</div>
<div class="t" style="left:488px;top:333.0px;font-size:13px;color:#6a6a6a;letter-spacing:-0.38px;">Block Size:</div>
<div class="t" style="left:507px;top:357.0px;font-size:13px;color:#6a6a6a;letter-spacing:-0.34px;">32768</div>
<div class="t" style="left:553px;top:357.0px;font-size:13px;color:#6a6a6a;letter-spacing:-0.67px;">Bytes</div>
<div class="t" style="left:471px;top:387.0px;font-size:13px;color:#6a6a6a;letter-spacing:0.1px;">Block size of the read buffer</div>
<div class="t" style="left:472px;top:412.0px;font-size:13px;color:#6a6a6a;letter-spacing:0.07px;">Start:</div>
<div class="t" style="left:488px;top:437.0px;font-size:13px;color:#6a6a6a;letter-spacing:-0.27px;">16384</div>
<div class="t" style="left:533px;top:437.0px;font-size:13px;color:#6a6a6a;letter-spacing:-0.63px;">Bytes</div>
<div class="t" style="left:589px;top:412.0px;font-size:13px;color:#6a6a6a;letter-spacing:-0.05px;">Increment:</div>
<div class="t" style="left:604px;top:437.0px;font-size:13px;color:#6a6a6a;letter-spacing:-0.42px;">16384</div>
<div class="t" style="left:650px;top:437.0px;font-size:13px;color:#6a6a6a;letter-spacing:-0.68px;">Bytes</div>
<div class="t" style="left:712px;top:412.0px;font-size:13px;color:#6a6a6a;letter-spacing:0.13px;">Maximum:</div>
<div class="t" style="left:727px;top:437.0px;font-size:13px;color:#6a6a6a;letter-spacing:-0.37px;">32768</div>
<div class="t" style="left:773px;top:437.0px;font-size:13px;color:#6a6a6a;letter-spacing:-0.68px;">Bytes</div>
<div class="t" style="left:470px;top:482.3px;font-size:14.5px;font-weight:bold;letter-spacing:0.01px;">Options</div>
<div class="t" style="left:486px;top:511.0px;font-size:13px;letter-spacing:0.17px;">Don't compare the content of hard linked files</div>
</div>
</body>
</html>
